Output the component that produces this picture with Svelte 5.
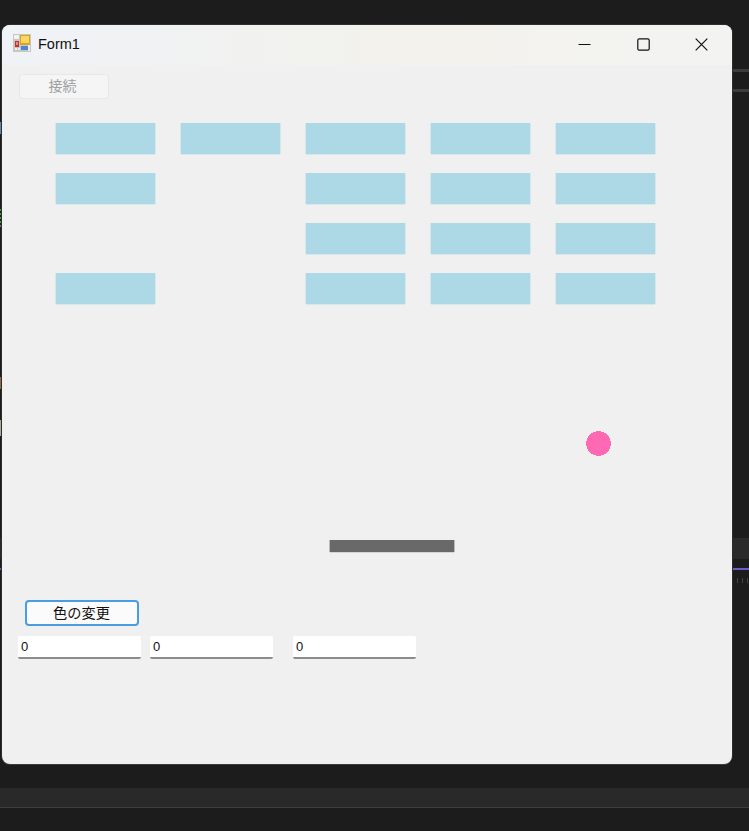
<script lang="ts">
  // 0 = brick gone
  const rows = [
    [1, 1, 1, 1, 1],
    [1, 0, 1, 1, 1],
    [0, 0, 1, 1, 1],
    [1, 0, 1, 1, 1]
  ];
  const bricks = rows.flat();
  const fields = ['0', '0'];
</script>

<div class="desktop">
  <div class="backdrop">
    <i class="line l1"></i>
    <i class="line l2"></i>
    <i class="band"></i>
    <i class="accent"></i>
    <i class="dots"></i>
    <i class="status"></i>
    <i class="tick t1"></i>
    <i class="tick t2"></i>
    <i class="tick t3"></i>
    <i class="tick t4"></i>
  </div>

  <div class="window">
    <header class="titlebar">
      <svg class="app-icon" width="18" height="18" viewBox="0 0 18 18" shape-rendering="crispEdges">
        <rect width="18" height="18" fill="#c6c6c2" />
        <rect x="1" y="1" width="5" height="4" fill="#f2f2f2" />
        <rect x="7" y="1" width="10" height="10" fill="#d9a520" />
        <rect x="8" y="2" width="8" height="7" fill="#fbd75e" />
        <rect x="2" y="7" width="4" height="6" fill="#c4302b" />
        <rect x="3" y="8" width="2" height="3" fill="#ee8a80" />
        <rect x="8" y="12" width="7" height="4" fill="#4d86d8" />
        <rect x="2" y="14" width="2" height="2" fill="#eeeeee" />
        <rect x="5" y="14" width="2" height="2" fill="#eeeeee" />
        <rect x="15" y="11" width="2" height="6" fill="#eeeeee" />
      </svg>
      <span class="title">Form1</span>
      <div class="caption-buttons">
        <button type="button" aria-label="Minimize">
          <svg width="13" height="13" viewBox="0 0 13 13"><path d="M0.5 6.5H12.5" /></svg>
        </button>
        <button type="button" aria-label="Maximize">
          <svg width="13" height="13" viewBox="0 0 13 13"><rect x="0.8" y="0.8" width="11.4" height="11.4" rx="1.4" /></svg>
        </button>
        <button type="button" aria-label="Close">
          <svg width="13" height="13" viewBox="0 0 13 13"><path d="M0.7 0.7L12.3 12.3M12.3 0.7L0.7 12.3" /></svg>
        </button>
      </div>
    </header>

    <div class="client">
      <button type="button" class="connect" disabled>接続</button>

      <div class="board">
        <div class="bricks">
          {#each bricks as on}
            {#if on}<div class="brick"></div>{:else}<div></div>{/if}
          {/each}
        </div>
        <svg class="ball" width="25" height="25" viewBox="0 0 25 25" shape-rendering="crispEdges">
          <circle cx="12.5" cy="12.5" r="12.3" />
        </svg>
        <div class="paddle"></div>
      </div>

      <button type="button" class="change-color">色の変更</button>

      <div class="inputs">
        {#each fields as value}
          <input type="text" {value} />
        {/each}
        <input class="last" type="text" value="0" />
      </div>
    </div>
  </div>
</div>

<style>
  :global(body) {
    margin: 0;
    background: #1c1c1c;
  }
  .desktop {
    position: relative;
    width: 749px;
    height: 831px;
    overflow: hidden;
    padding: 25px 0 0 2px;
    box-sizing: border-box;
    font-family: "Noto Sans CJK JP", "Liberation Sans", sans-serif;
  }
  .backdrop i {
    position: absolute;
    display: block;
  }
  .line {
    right: 0;
    width: 20px;
    height: 3px;
    background: #3c3c3c;
  }
  .l1 { top: 69px; }
  .l2 { top: 89px; }
  .band {
    left: 0;
    right: 0;
    top: 538px;
    height: 21px;
    background: #2a2a2a;
  }
  .accent {
    left: 0;
    right: 0;
    top: 568px;
    height: 2px;
    background: #6d5acb;
  }
  .dots {
    right: 0;
    top: 578px;
    width: 17px;
    height: 5px;
    background: repeating-linear-gradient(90deg, #444 0 1px, transparent 1px 5px);
  }
  .status {
    left: 0;
    right: 0;
    top: 788px;
    height: 19px;
    background: #292929;
    border-bottom: 1px solid #3d3d3d;
  }
  .tick {
    left: 0;
    width: 1px;
  }
  .t1 { top: 122px; height: 12px; background: #4a90c8; }
  .t2 {
    top: 209px;
    height: 18px;
    background: repeating-linear-gradient(180deg, #4c9a44 0 2px, transparent 2px 4px);
  }
  .t3 { top: 377px; height: 12px; background: #8a6c40; }
  .t4 { top: 420px; height: 16px; background: #b0a898; }

  .window {
    position: relative;
    width: 730px;
    height: 739px;
    border-radius: 8px;
    overflow: hidden;
    background: #f0f0f0;
    box-shadow: 0 1px 0 #3c3c3c, 0 0 0 1px #2e2e2e;
    display: flex;
    flex-direction: column;
  }
  .titlebar {
    height: 40px;
    flex: none;
    box-sizing: border-box;
    padding: 0 0 2px 11px;
    display: flex;
    align-items: center;
    background: linear-gradient(90deg, #eff2f7 0%, #f3f2ec 55%, #f3f3f2 100%);
  }
  .app-icon {
    flex: none;
    margin-bottom: 2px;
  }
  .title {
    margin-left: 7px;
    font-family: "Liberation Sans", sans-serif;
    font-size: 14.5px;
    color: #111;
  }
  .caption-buttons {
    margin-left: auto;
    display: flex;
    padding-right: 1px;
  }
  .caption-buttons button {
    width: 58.5px;
    height: 38px;
    padding: 0;
    border: none;
    background: none;
    display: flex;
    align-items: center;
    justify-content: center;
  }
  .caption-buttons svg {
    fill: none;
    stroke: #111;
    stroke-width: 1.2;
  }

  .client {
    flex: 1;
    padding: 9px 0 0 17px;
  }
  .connect {
    display: block;
    width: 90px;
    height: 25px;
    padding: 0 3px 4px 0;
    border: 1px solid #e8e8e8;
    border-radius: 4px;
    background: #f5f5f5;
    color: #a0a0a0;
    font: 14px "Noto Sans CJK JP", sans-serif;
  }
  .board {
    position: relative;
    height: 501px;
    padding: 24px 0 0 37px;
    box-sizing: border-box;
  }
  .bricks {
    display: grid;
    grid-template-columns: repeat(5, 99px);
    grid-auto-rows: 31px;
    column-gap: 26px;
    row-gap: 19px;
  }
  .brick {
    background: #add8e6;
    box-shadow: 1px 0 0 rgba(173, 216, 230, 0.35), -1px 0 0 rgba(173, 216, 230, 0.35), 0 1px 0 rgba(173, 216, 230, 0.35);
  }
  .ball {
    position: absolute;
    left: 567px;
    top: 332px;
    fill: #ff69b4;
  }
  .paddle {
    position: absolute;
    left: 311px;
    top: 441px;
    width: 124px;
    height: 12px;
    background: #696969;
    box-shadow: 1px 0 0 rgba(105, 105, 105, 0.4), -1px 0 0 rgba(105, 105, 105, 0.4), 0 1px 0 rgba(105, 105, 105, 0.2);
  }
  .change-color {
    display: block;
    width: 114px;
    height: 26px;
    margin-left: 6px;
    padding: 0 1px 6px 0;
    border: 2px solid #4a9de0;
    border-radius: 4px;
    background: #fbfbfb;
    color: #111;
    font: 14.2px "Noto Sans CJK JP", sans-serif;
  }
  .inputs {
    display: flex;
    gap: 9px;
    margin: 10px 0 0 -1px;
  }
  .inputs input {
    width: 123px;
    height: 23px;
    box-sizing: border-box;
    padding: 0 0 1px 3px;
    border: none;
    border-bottom: 2px solid #8c8c8c;
    border-radius: 2px;
    background: #fff;
    color: #111;
    font: 13px "Liberation Sans", sans-serif;
  }
  .inputs .last {
    margin-left: 11px;
  }
</style>
